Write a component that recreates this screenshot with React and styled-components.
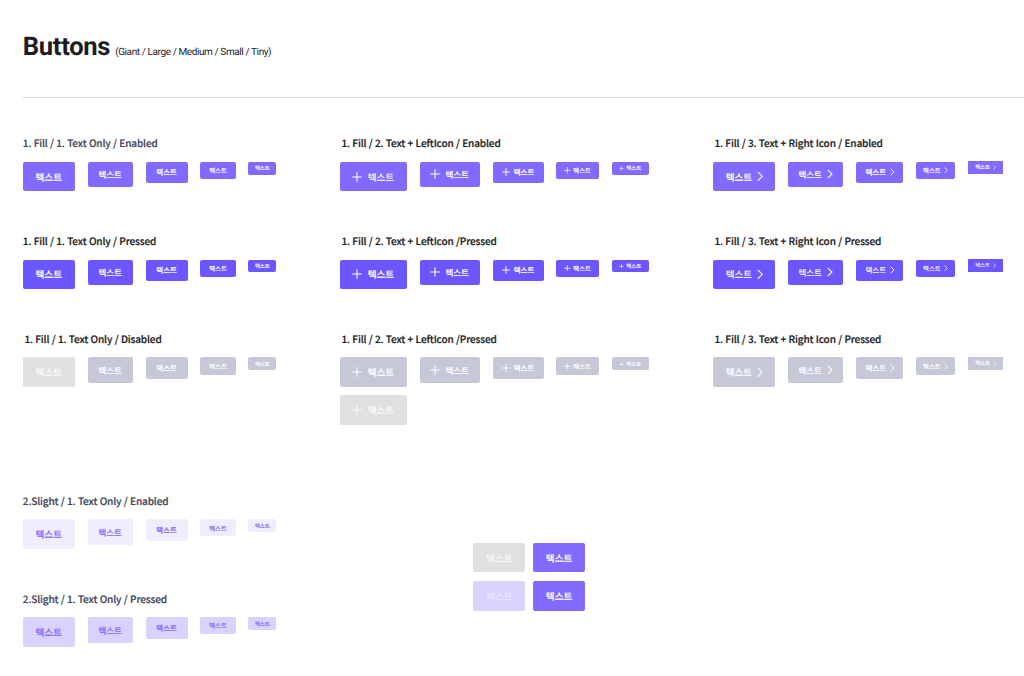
import React from "react";
import styled, { createGlobalStyle } from "styled-components";

const GlobalStyle = createGlobalStyle`
  * { box-sizing: border-box; }
  body {
    margin: 0;
    background: #fff;
    overflow: hidden;
    font-family: "Noto Sans CJK KR", "Noto Sans", sans-serif;
    text-rendering: geometricPrecision;
  }
`;

const SIZES = {
  giant: { height: 29.7, font: 9.6, stroke: 0.15, line: 1.1, plus: 10, chevron: 10.6, text: 52, left: 67, right: 62, leftGap: 5.4, rightGap: 4.8 },
  large: { height: 25.6, font: 8.5, stroke: 0.15, line: 1.1, plus: 10, chevron: 10, text: 45.2, left: 60.1, right: 55.2, leftGap: 5.4, rightGap: 5.2 },
  medium: { height: 21.3, font: 7.45, stroke: 0.15, line: 0.95, plus: 8, chevron: 8, text: 42, left: 51, right: 47.2, leftGap: 3.8, rightGap: 4.2 },
  small: { height: 17.1, font: 6.4, stroke: 0.12, line: 0.8, plus: 6.6, chevron: 6.6, text: 35.2, left: 42.6, right: 39.3, leftGap: 2.4, rightGap: 3.5 },
  tiny: { height: 12.9, font: 5.35, stroke: 0.08, line: 0.6, plus: 4.8, chevron: 5, text: 27.8, left: 37.2, right: 34.8, leftGap: 2.2, rightGap: 2.8 },
};

const PADS = {
  left: { giant: 12.4, large: 10.4, medium: 9.4, small: 7.9, tiny: 7.6 },
  right: { giant: 12.8, large: 10.8, medium: 9.8, small: 7.4, tiny: 7.4 },
};

const TONES = {
  enabled: { bg: "#816aff", fg: "#fff" },
  pressed: { bg: "#6c56ff", fg: "#fff" },
  disabled: { bg: "#c6c7d7", fg: "#fff" },
  muted: { bg: "#e0e0e0", fg: "#fafafa" },
  slight: { bg: "#f0edff", fg: "#8068f8" },
  slightPressed: { bg: "#d9d2ff", fg: "#8068f8" },
  slightDisabled: { bg: "#d9d2ff", fg: "#ece8ff" },
};

const Page = styled.main`
  width: 1024px;
  height: 676px;
  padding-left: 22.8px;
  overflow: hidden;
`;

const Header = styled.header`
  display: flex;
  align-items: baseline;
  gap: 5px;
  height: 98px;
  padding-top: 32px;
  border-bottom: 1px solid #d9d9dc;
  font-family: Roboto, sans-serif;
  color: #1c1c1e;
`;

const Title = styled.h1`
  margin: 0;
  font-size: 25.6px;
  line-height: 30px;
  font-weight: 700;
  letter-spacing: -0.32px;
`;

const Subtitle = styled.span`
  font-size: 10px;
  line-height: 14px;
  letter-spacing: -0.4px;
`;

const Gallery = styled.div`
  display: grid;
  grid-template-columns: 317.1px 373px 1fr;
  grid-auto-rows: 97.9px;
  padding-top: 37px;
`;

const LowerGallery = styled.div`
  display: flex;
  padding-top: 64px;
`;

const SlightColumn = styled.div`
  display: grid;
  grid-auto-rows: 97.9px;
  width: 450.6px;
`;

const Swatches = styled.div`
  display: grid;
  grid-template-columns: repeat(2, 52px);
  gap: 9px 7.7px;
  align-content: start;
  padding-top: 50px;
`;

const Section = styled.section`
  display: flex;
  flex-direction: column;
`;

const Label = styled.h2`
  margin: 0 0 10.7px;
  padding-left: ${(p) => p.$indent}px;
  font-size: 10.05px;
  line-height: 16px;
  font-weight: 500;
  letter-spacing: -0.14px;
  word-spacing: 0.3px;
  -webkit-text-stroke: 0.2px currentColor;
  color: ${(p) => (p.$soft ? "#45455a" : "#1c1c1e")};
  white-space: nowrap;
`;

const ButtonRow = styled.div`
  display: flex;
  align-items: flex-start;
  gap: 12.8px;
  margin-bottom: 8px;
`;

const ButtonBox = styled.button`
  display: flex;
  flex: none;
  align-items: center;
  justify-content: ${(p) => (p.$kind === "text" ? "center" : "flex-start")};
  gap: ${(p) => p.$gap}px;
  width: ${(p) => p.$width}px;
  height: ${(p) => p.$height}px;
  margin: ${(p) => (p.$square ? "-0.8px 0 0" : "0")};
  padding: 0 0 0 ${(p) => p.$pad}px;
  border: 0;
  border-radius: ${(p) => (p.$square ? 0 : 2)}px;
  background: ${(p) => p.$tone.bg};
  color: ${(p) => p.$tone.fg};
  font-family: inherit;
  font-size: ${(p) => p.$font}px;
  font-weight: 500;
  line-height: 1;
  text-rendering: inherit;
  white-space: nowrap;
`;

const Caption = styled.span`
  padding-top: 1.6px;
  -webkit-text-stroke: ${(p) => p.$stroke}px currentColor;
`;

const Icon = styled.svg`
  display: block;
  flex: none;
  fill: none;
  stroke: currentColor;
`;

function Plus({ size, line }) {
  return (
    <Icon width={size} height={size} viewBox="0 0 10 10" strokeWidth={line}>
      <path vectorEffect="non-scaling-stroke" d="M5 0.2V9.8M0.2 5H9.8" />
    </Icon>
  );
}

function Chevron({ size, line }) {
  return (
    <Icon width={size * 0.6} height={size} viewBox="0 0 6 10" strokeWidth={line}>
      <path vectorEffect="non-scaling-stroke" d="M0.8 0.8L5 5L0.8 9.2" />
    </Icon>
  );
}

function Button({ size = "giant", kind = "text", tone, light = false }) {
  const s = SIZES[size];
  return (
    <ButtonBox
      $kind={kind}
      $tone={TONES[tone]}
      $width={s[kind]}
      $height={s.height}
      $font={s.font}
      $gap={kind === "left" ? s.leftGap : s.rightGap}
      $pad={kind === "text" ? 0 : PADS[kind][size]}
      $square={kind === "right" && size === "tiny"}
    >
      {kind === "left" && <Plus size={s.plus} line={s.line} />}
      <Caption $stroke={light ? 0 : s.stroke}>텍스트</Caption>
      {kind === "right" && <Chevron size={s.chevron} line={s.line} />}
    </ButtonBox>
  );
}

function ButtonSet({ label, indent = 0, soft, kind = "text", tone, firstTone, light = [], extra }) {
  return (
    <Section>
      <Label $indent={indent} $soft={soft}>{label}</Label>
      <ButtonRow>
        {Object.keys(SIZES).map((size, i) => (
          <Button key={size} size={size} kind={kind} tone={i === 0 && firstTone ? firstTone : tone} light={light.includes(size)} />
        ))}
      </ButtonRow>
      {extra && <Button kind={kind} tone={extra} />}
    </Section>
  );
}

export default function App() {
  return (
    <Page>
      <GlobalStyle />
      <Header>
        <Title>Buttons</Title>
        <Subtitle>(Giant / Large / Medium / Small / Tiny)</Subtitle>
      </Header>
      <Gallery>
        <ButtonSet label="1. Fill / 1. Text Only / Enabled" soft tone="enabled" />
        <ButtonSet label="1. Fill / 2. Text + LeftIcon / Enabled" indent={1.6} kind="left" tone="enabled" light={["giant"]} />
        <ButtonSet label="1. Fill / 3. Text + Right Icon / Enabled" indent={1.6} kind="right" tone="enabled" />
        <ButtonSet label="1. Fill / 1. Text Only / Pressed" tone="pressed" />
        <ButtonSet label="1. Fill / 2. Text + LeftIcon /Pressed" indent={1.6} kind="left" tone="pressed" />
        <ButtonSet label="1. Fill / 3. Text + Right Icon / Pressed" indent={1.6} kind="right" tone="pressed" light={Object.keys(SIZES)} />
        <ButtonSet label="1. Fill / 1. Text Only / Disabled" indent={1.6} tone="disabled" firstTone="muted" />
        <ButtonSet label="1. Fill / 2. Text + LeftIcon /Pressed" indent={1.6} kind="left" tone="disabled" extra="muted" />
        <ButtonSet label="1. Fill / 3. Text + Right Icon / Pressed" indent={1.6} kind="right" tone="disabled" />
      </Gallery>
      <LowerGallery>
        <SlightColumn>
          <ButtonSet label="2.Slight / 1. Text Only / Enabled" soft tone="slight" />
          <ButtonSet label="2.Slight / 1. Text Only / Pressed" soft tone="slightPressed" />
        </SlightColumn>
        <Swatches>
          <Button tone="muted" light />
          <Button tone="enabled" />
          <Button tone="slightDisabled" light />
          <Button tone="enabled" />
        </Swatches>
      </LowerGallery>
    </Page>
  );
}
